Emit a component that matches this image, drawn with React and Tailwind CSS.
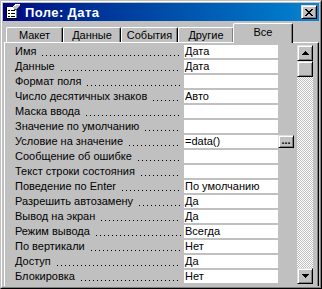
import React from "react";

const rows = [
  ["Имя", "Дата"],
  ["Данные", "Дата"],
  ["Формат поля", ""],
  ["Число десятичных знаков", "Авто"],
  ["Маска ввода", ""],
  ["Значение по умолчанию", ""],
  ["Условие на значение", "=data()", true],
  ["Сообщение об ошибке", ""],
  ["Текст строки состояния", ""],
  ["Поведение по Enter", "По умолчанию"],
  ["Разрешить автозамену", "Да"],
  ["Вывод на экран", "Да"],
  ["Режим вывода", "Всегда"],
  ["По вертикали", "Нет"],
  ["Доступ", "Да"],
  ["Блокировка", "Нет"],
];

const tabs = [
  { label: "Макет", w: "w-[57px]" },
  { label: "Данные", w: "w-[58px]" },
  { label: "События", w: "w-[57px]" },
  { label: "Другие", w: "w-[56px]" },
];

const raised =
  "border border-t-[#dfdfdf] border-l-[#dfdfdf] border-r-black border-b-black shadow-[inset_1px_1px_#fff,inset_-1px_-1px_#808080] bg-[#c0c0c0]";

function TitleIcon() {
  return (
    <svg width="16" height="16" viewBox="0 0 16 16" shapeRendering="crispEdges">
      <rect x="1" y="3" width="11" height="12" fill="#fff" />
      <rect x="1" y="3" width="1" height="12" fill="#000" />
      <rect x="11" y="5" width="1" height="10" fill="#808080" />
      <rect x="1" y="14" width="11" height="1" fill="#000" />
      <rect x="3" y="6" width="2" height="1" fill="#000" />
      <rect x="6" y="6" width="4" height="1" fill="#000" />
      <rect x="3" y="9" width="2" height="1" fill="#000" />
      <rect x="6" y="9" width="4" height="1" fill="#000" />
      <rect x="3" y="12" width="2" height="1" fill="#000" />
      <rect x="6" y="12" width="4" height="1" fill="#000" />
      <path d="M8 3 L12 0 L15 1 L15 3 L12 5 L9 5 Z" fill="#c0c0c0" />
      <path d="M8 3 L12 0 L15 1" fill="none" stroke="#fff" strokeWidth="1" />
      <path d="M15 2 L12 5 L9 5" fill="none" stroke="#404040" strokeWidth="1" />
    </svg>
  );
}

function ScrollButton({ dir }) {
  return (
    <div className={`h-[16px] w-[16px] flex items-center justify-center ${raised}`}>
      <svg width="7" height="4" viewBox="0 0 7 4" shapeRendering="crispEdges">
        {dir === "up" ? (
          <path d="M3 0h1v1h1v1h1v1h1v1H0V3h1V2h1V1h1z" fill="#000" />
        ) : (
          <path d="M0 0h7v1H6v1H5v1H4v1H3V3H2V2H1V1H0z" fill="#000" />
        )}
      </svg>
    </div>
  );
}

export default function App() {
  return (
    <div className="w-[322px] h-[289px] overflow-hidden border border-t-[#c0c0c0] border-l-[#c0c0c0] border-r-black border-b-black bg-[#c0c0c0] font-['Liberation_Sans',Arial,sans-serif] text-[11px] text-black">
      <div className="h-full border border-t-white border-l-white border-r-[#808080] border-b-[#808080] p-[1px] flex flex-col">
        {/* TITLE */}
        <div className="h-[18px] shrink-0 flex items-center bg-linear-to-r from-[#000080] to-[#1084d0] pl-[2px] pr-[2px]">
          <TitleIcon />
          <span className="ml-[4px] text-white font-bold text-[13px] tracking-[0.4px] leading-none">Поле: Дата</span>
          <div className={`ml-auto h-[14px] w-[16px] flex items-center justify-center ${raised}`}>
            <svg width="8" height="7" viewBox="0 0 8 7" shapeRendering="crispEdges">
              <path
                d="M0 0h2v1h1v1h2V1h1V0h2v1H7v1H6v1H5v1h1v1h1v1h1v1H6V6H5V5H3v1H2v1H0V6h1V5h1V4h1V3H2V2H1V1H0z"
                fill="#000"
              />
            </svg>
          </div>
        </div>

        {/* TABS */}
        <div className="h-[21px] shrink-0 flex items-end pl-[3px]">
          {tabs.map((t) => (
            <div
              key={t.label}
              className={`${t.w} h-[15px] flex items-center justify-center rounded-t-[2px] border-t border-l border-r border-t-white border-l-white border-r-black shadow-[inset_-1px_0_#808080]`}
            >
              {t.label}
            </div>
          ))}
          <div className="relative z-10 -ml-[1px] -mb-[1px] w-[60px] h-[20px] flex items-center justify-center pb-[2px] bg-[#c0c0c0] rounded-t-[2px] border-t border-l border-r border-t-white border-l-white border-r-black shadow-[inset_-1px_0_#808080]">
            Все
          </div>
        </div>

        {/* PANEL */}
        <div className="flex-1 min-h-0 ml-[1px] border-t border-l border-r border-b-0 border-t-white border-l-white border-r-black shadow-[inset_-1px_0_#808080] pt-[2px] pl-[2px] pr-[3px] overflow-hidden">
          <div className="flex h-[241px]">
            <div className="flex flex-col">
              {rows.map(([label, value, builder]) => (
                <div key={label} className="h-[15px] shrink-0 flex">
                  <div className="w-[177px] h-[13px] flex pl-[8px] pr-[3px] leading-[13px] overflow-hidden whitespace-nowrap">
                    <span>{label}</span>
                    {/* dotted leader */}
                    <span className="ml-[6px] mt-[10px] h-[1px] flex-1 bg-[linear-gradient(to_right,#000_1px,transparent_1px)] bg-[length:4px_1px] bg-repeat-x" />
                  </div>
                  <div className="w-[94px] h-[13px] bg-white pl-[1px] leading-[13px] whitespace-nowrap overflow-hidden">
                    {value}
                  </div>
                  <div className="w-[19px] h-[13px]">
                    {builder && (
                      <div className={`w-[16px] h-[13px] flex items-center justify-center font-bold leading-none pb-[3px] ${raised}`}>
                        ...
                      </div>
                    )}
                  </div>
                </div>
              ))}
            </div>

            {/* SCROLLBAR */}
            <div className="w-[16px] h-[239px] flex flex-col">
              <ScrollButton dir="up" />
              <div className={`h-[16px] w-[16px] ${raised}`} />
              <div className="flex-1 bg-[repeating-conic-gradient(#fff_0_25%,#c0c0c0_0_50%)] bg-[length:2px_2px]" />
              <ScrollButton dir="down" />
            </div>
          </div>
        </div>
      </div>
    </div>
  );
}
